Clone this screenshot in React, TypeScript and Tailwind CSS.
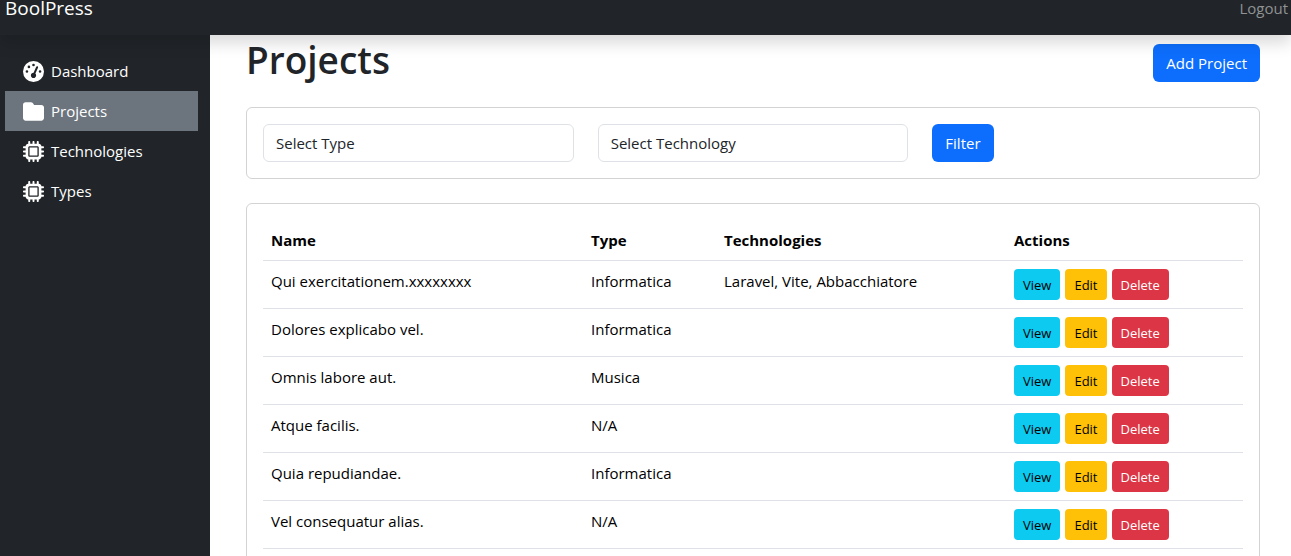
import React from "react";
import { FaFolder, FaGaugeHigh, FaMicrochip } from "react-icons/fa6";
import type { IconType } from "react-icons";

type Project = { name: string; type: string; technologies: string };

const projects: Project[] = [
  { name: "Qui exercitationem.xxxxxxxx", type: "Informatica", technologies: "Laravel, Vite, Abbacchiatore" },
  { name: "Dolores explicabo vel.", type: "Informatica", technologies: "" },
  { name: "Omnis labore aut.", type: "Musica", technologies: "" },
  { name: "Atque facilis.", type: "N/A", technologies: "" },
  { name: "Quia repudiandae.", type: "Informatica", technologies: "" },
  { name: "Vel consequatur alias.", type: "N/A", technologies: "" },
];

const links: { label: string; icon: IconType; active?: boolean }[] = [
  { label: "Dashboard", icon: FaGaugeHigh },
  { label: "Projects", icon: FaFolder, active: true },
  { label: "Technologies", icon: FaMicrochip },
  { label: "Types", icon: FaMicrochip },
];

function Header() {
  return (
    <header className="relative z-10 flex shrink-0 items-start justify-between bg-[#212529] pr-[3px] pb-[19px] pl-[5px] leading-4 shadow-[0_8px_16px_rgba(0,0,0,0.15)]">
      <a href="#" className="text-[19px] leading-4 text-white">BoolPress</a>
      <a href="#" className="text-[#909294]">Logout</a>
    </header>
  );
}

function Sidebar() {
  return (
    <nav aria-label="Main" className="w-[210px] shrink-0 bg-[#212529] pt-4 pr-3 pl-[5px]">
      <ul>
        {links.map(({ label, icon: Icon, active }) => (
          <li key={label}>
            <a
              href="#"
              aria-current={active ? "page" : undefined}
              className={`flex h-10 items-center gap-[7px] px-[18px] text-white ${active ? "bg-[#6c757d]" : ""}`}
            >
              <Icon size={21} aria-hidden="true" />
              {label}
            </a>
          </li>
        ))}
      </ul>
    </nav>
  );
}

function FilterSelect({ id, label }: { id: string; label: string }) {
  return (
    <select
      id={id}
      aria-label={label}
      className="h-[38px] w-full appearance-none rounded-md border border-[#dee2e6] bg-white px-3 text-[#212529]"
    >
      <option>{label}</option>
    </select>
  );
}

function Filters() {
  return (
    <form className="mb-6 grid grid-cols-3 gap-6 rounded-md border border-[#d3d3d4] p-4">
      <FilterSelect id="type" label="Select Type" />
      <FilterSelect id="technology" label="Select Technology" />
      <button type="button" className="h-[38px] justify-self-start rounded-md bg-[#0d6efd] px-[13px] text-white">
        Filter
      </button>
    </form>
  );
}

function ProjectTable() {
  return (
    <div className="rounded-md border border-[#d3d3d4] p-4 text-black">
      <table className="w-full table-fixed border-collapse text-left leading-6">
        <thead>
          <tr className="border-b border-[#dee2e6]">
            <th className="w-[320px] p-2 font-bold">Name</th>
            <th className="w-[133px] p-2 font-bold">Type</th>
            <th className="w-[290px] p-2 font-bold">Technologies</th>
            <th className="w-[237px] p-2 font-bold">Actions</th>
          </tr>
        </thead>
        <tbody>
          {projects.map((project) => (
            <tr key={project.name} className="border-b border-[#dee2e6] align-top">
              <td className="p-2">{project.name}</td>
              <td className="p-2">{project.type}</td>
              <td className="p-2">{project.technologies}</td>
              <td className="p-2">
                <div className="flex gap-[5px] text-[13px]">
                  <a href="#" className="flex h-[31px] items-center rounded bg-[#0dcaf0] px-[9px]">View</a>
                  <a href="#" className="flex h-[31px] items-center rounded bg-[#ffc107] px-[9px]">Edit</a>
                  <button type="button" className="h-[31px] rounded bg-[#dc3545] px-[9px] text-white">Delete</button>
                </div>
              </td>
            </tr>
          ))}
        </tbody>
      </table>
    </div>
  );
}

export default function App() {
  return (
    <div className="flex h-screen flex-col overflow-hidden bg-white font-['Open_Sans','Noto_Sans',sans-serif] text-[15px] text-[#212529]">
      <Header />
      <div className="flex min-h-0 flex-1">
        <Sidebar />
        <main className="min-w-0 flex-1 pt-[9px] pr-[31px] pl-9">
          <div className="mb-[25px] flex items-start justify-between">
            <h1 className="text-[37px] leading-8 font-semibold">Projects</h1>
            <a href="#" className="flex h-[38px] items-center rounded-md bg-[#0d6efd] px-[13px] text-white">Add Project</a>
          </div>
          <Filters />
          <ProjectTable />
        </main>
      </div>
    </div>
  );
}
